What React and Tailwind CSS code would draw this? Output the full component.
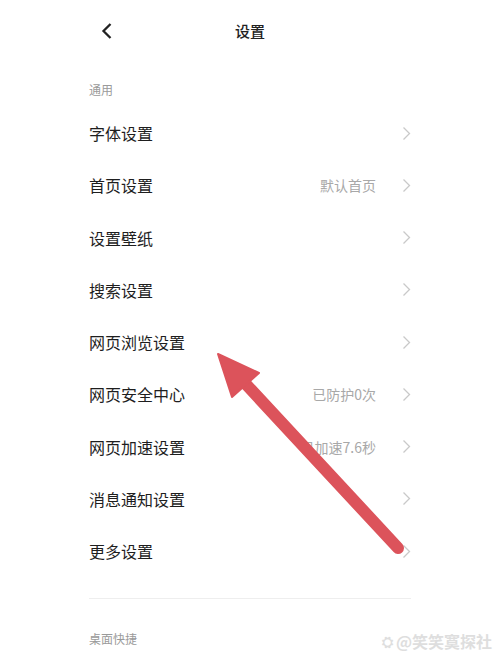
import React from "react";

const rows = [
  { label: "字体设置" },
  { label: "首页设置", value: "默认首页" },
  { label: "设置壁纸" },
  { label: "搜索设置" },
  { label: "网页浏览设置" },
  { label: "网页安全中心", value: "已防护0次" },
  { label: "网页加速设置", value: "已加速7.6秒" },
  { label: "消息通知设置" },
  { label: "更多设置" },
];

function Chevron() {
  return (
    <svg width="9" height="15" viewBox="0 0 9 15" className="shrink-0">
      <path d="M1.5 1.5 L7.5 7.5 L1.5 13.5" fill="none" stroke="#c9c9c9" strokeWidth="1.3" />
    </svg>
  );
}

export default function App() {
  return (
    <div
      className="relative w-[500px] h-[667px] overflow-hidden bg-white"
      style={{ fontFamily: '"Noto Sans CJK SC", "Noto Sans", sans-serif' }}
    >
      <div className="relative flex h-[62px] items-center justify-center">
        <svg width="14" height="18" viewBox="0 0 14 18" className="absolute left-[100px] top-[22px]">
          <path d="M10.5 2 L3.5 9 L10.5 16" fill="none" stroke="#222" strokeWidth="2.3" />
        </svg>
        <span className="text-[15px] leading-[20px] text-[#222] font-medium">设置</span>
      </div>
      <div className="px-[89px]">
        <div className="pt-[21px] pb-[10px] text-[12px] leading-[14px] text-[#9a9a9a]">通用</div>
        {rows.map((r) => (
          <div key={r.label} className="flex h-[52.25px] items-center">
            <span className="flex-1 text-[16px] leading-[20px] text-[#1e1e1e]">{r.label}</span>
            {r.value && (
              <span className="mr-[26px] text-[14px] leading-[18px] text-[#a8a8a8]">{r.value}</span>
            )}
            <Chevron />
          </div>
        ))}
        <div className="mt-[21px] h-px bg-[#eeeeee]" />
        <div className="pt-[32px] text-[12px] leading-[16px] text-[#9a9a9a]">桌面快捷</div>
      </div>
      <div className="absolute right-[8px] bottom-[17px] flex items-center gap-[3px] text-[16px] leading-[18px] font-bold text-[#dedede]">
        <span className="text-[14px]">⛭</span>
        <span>@笑笑寞探社</span>
      </div>
      <svg className="absolute left-0 top-0 pointer-events-none" width="500" height="667" viewBox="0 0 500 667">
        <line x1="398" y1="548" x2="243" y2="381" stroke="#dc535b" strokeWidth="12" strokeLinecap="round" />
        <polygon points="218,354 232,397 259,373" fill="#dc535b" stroke="#dc535b" strokeWidth="2" strokeLinejoin="round" />
      </svg>
    </div>
  );
}
